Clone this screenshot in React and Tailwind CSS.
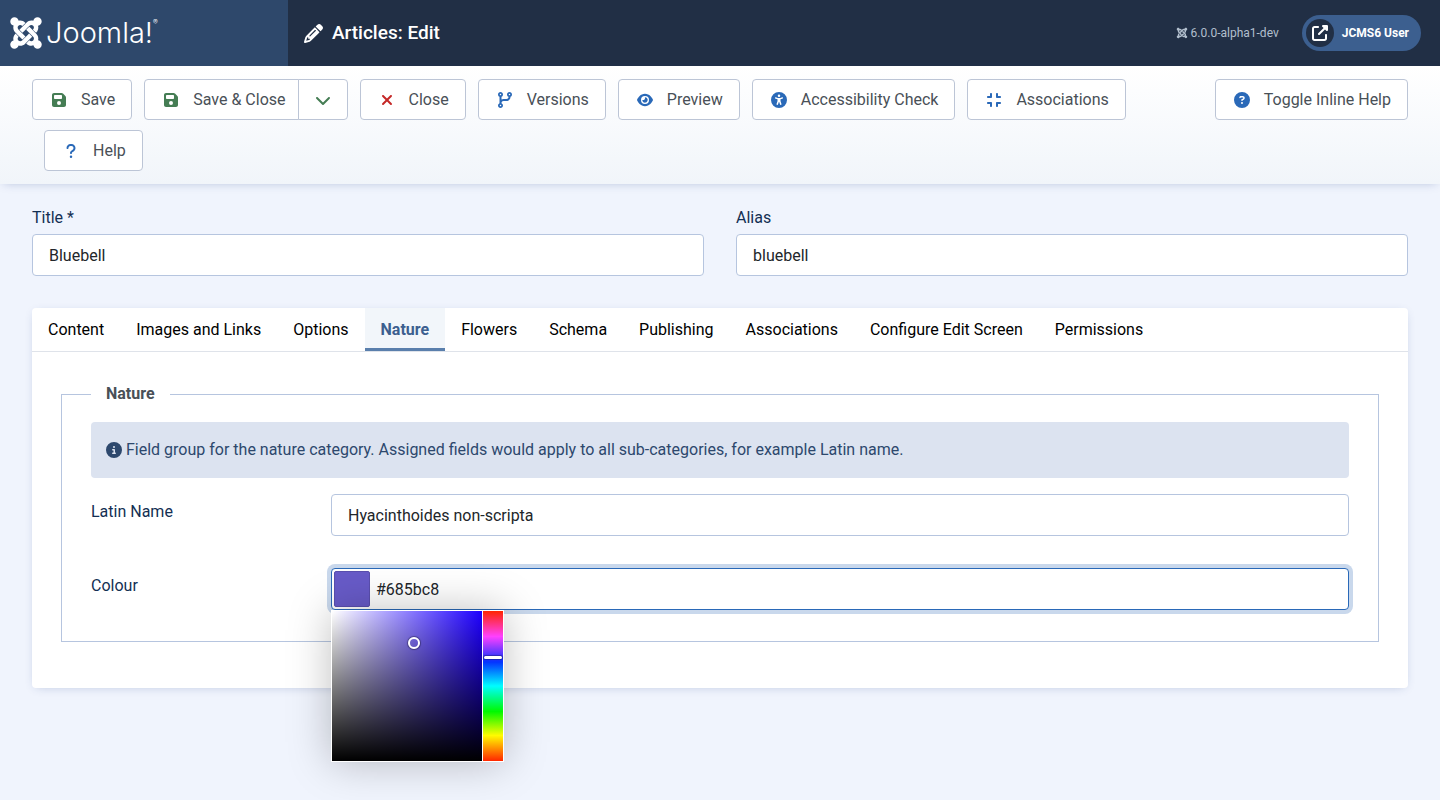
import React, { useState } from "react";
import {
  FaChevronDown,
  FaCircleInfo,
  FaCircleQuestion,
  FaCodeBranch,
  FaCompress,
  FaEye,
  FaFloppyDisk,
  FaJoomla,
  FaPencil,
  FaQuestion,
  FaUniversalAccess,
  FaUpRightFromSquare,
  FaXmark,
} from "react-icons/fa6";

const tabs = [
  "Content",
  "Images and Links",
  "Options",
  "Nature",
  "Flowers",
  "Schema",
  "Publishing",
  "Associations",
  "Configure Edit Screen",
  "Permissions",
];

function ToolbarButton({ icon: Icon, tone = "text-[#2a69b8]", className = "ml-3 rounded", children }) {
  return (
    <button
      type="button"
      className={`flex h-[41px] items-center gap-3 border border-[#bcc5d6] bg-white px-4 text-[#495057] ${className}`}
    >
      <span className={`flex w-5 justify-center ${tone}`}>
        <Icon aria-hidden="true" />
      </span>
      {children}
    </button>
  );
}

function Header() {
  return (
    <header className="flex h-[66px] items-stretch bg-[#212f45] text-white">
      <a href="#home" aria-label="Joomla!" className="flex w-72 shrink-0 items-center gap-0.5 bg-[#2e486b] px-2">
        <FaJoomla className="size-9" aria-hidden="true" />
        <span className="flex items-start font-['Inter'] text-[29px] leading-8 font-light">
          Joomla!<span className="text-[7px] leading-3">®</span>
        </span>
      </a>
      <div className="flex flex-1 items-center px-4">
        <FaPencil className="size-[19px]" aria-hidden="true" />
        <h1 className="ml-[9px] text-[19px] font-medium">Articles: Edit</h1>
        <div className="ml-auto flex items-center gap-[3px] text-xs text-[#b2bfcd]">
          <FaJoomla className="size-3" aria-hidden="true" />
          <span>6.0.0-alpha1-dev</span>
        </div>
        <a
          href="#site"
          className="mr-[3px] ml-[23px] flex h-9 items-center gap-2 rounded-full bg-[#3c5f8f] pr-3 pl-1 text-xs font-bold"
        >
          <span className="flex size-7 items-center justify-center rounded-full bg-[#212f45]">
            <FaUpRightFromSquare className="size-4" aria-hidden="true" />
          </span>
          JCMS6 User
        </a>
      </div>
    </header>
  );
}

function Toolbar() {
  return (
    <div
      role="toolbar"
      aria-label="Toolbar"
      className="flex flex-wrap gap-y-2.5 bg-linear-to-b from-white to-[#f1f5fa] px-8 py-[13px] shadow-[0_2px_10px_-4px_rgba(30,60,130,0.35)]"
    >
      <ToolbarButton icon={FaFloppyDisk} tone="text-[#457d54]" className="rounded">Save</ToolbarButton>
      <div className="ml-3 flex">
        <ToolbarButton icon={FaFloppyDisk} tone="text-[#457d54]" className="rounded-l pr-3">
          Save &amp; Close
        </ToolbarButton>
        <button
          type="button"
          aria-label="More save options"
          className="-ml-px flex w-[50px] items-center justify-center rounded-r border border-[#bcc5d6] bg-white text-[#457d54]"
        >
          <FaChevronDown aria-hidden="true" />
        </button>
      </div>
      <ToolbarButton icon={FaXmark} tone="text-[#c52827]">Close</ToolbarButton>
      <ToolbarButton icon={FaCodeBranch}>Versions</ToolbarButton>
      <ToolbarButton icon={FaEye}>Preview</ToolbarButton>
      <ToolbarButton icon={FaUniversalAccess}>Accessibility Check</ToolbarButton>
      <ToolbarButton icon={FaCompress}>Associations</ToolbarButton>
      <ToolbarButton icon={FaCircleQuestion} className="ml-auto rounded">Toggle Inline Help</ToolbarButton>
      <ToolbarButton icon={FaQuestion}>Help</ToolbarButton>
    </div>
  );
}

function TitleField({ id, label, value }) {
  return (
    <div className="flex flex-1 flex-col gap-1">
      <label htmlFor={id} className="text-[#132f53]">{label}</label>
      <input
        id={id}
        defaultValue={value}
        className="h-[42px] w-full rounded border border-[#b6c5df] bg-white px-4 text-[#22262a] outline-none"
      />
    </div>
  );
}

function ColourPicker() {
  return (
    <div className="absolute top-full -left-px z-10 mt-px flex gap-px border border-white bg-white shadow-[0_0_40px_rgba(0,0,0,0.25)]">
      <div className="relative size-[150px] bg-[linear-gradient(to_bottom,transparent,#000),linear-gradient(to_right,#fff,#1e00ff)]">
        <span className="absolute top-[26px] left-[76px] size-3 rounded-full border-2 border-white shadow-[0_0_1px_1px_rgba(0,0,0,0.35)]" />
        <input type="range" aria-label="Saturation" defaultValue="54" className="absolute inset-0 size-full opacity-0" />
      </div>
      <div className="relative h-[150px] w-5 bg-[linear-gradient(to_bottom,#ff2600_0%,#ff40ff_17%,#0433ff_34%,#00fdff_50%,#00f900_67%,#fffb00_83%,#ff2600_100%)]">
        <span className="absolute inset-x-px top-[45px] h-[3px] rounded-sm bg-white shadow-[0_0_1px_1px_rgba(0,0,0,0.3)]" />
        <input type="range" aria-label="Hue" defaultValue="69" className="absolute inset-0 size-full opacity-0" />
      </div>
    </div>
  );
}

function NaturePanel() {
  return (
    <div role="tabpanel" aria-label="Nature" className="px-[29px] pt-[30px] pb-[46px]">
      <fieldset className="border border-[#b6c5df] px-[29px] pt-4 pb-[31px]">
        <legend className="px-[15px] text-base font-bold text-[#495057]">Nature</legend>
        <div className="flex min-h-14 items-center gap-1 rounded bg-[#dce3f0] px-[15px] text-[#2d486d]">
          <FaCircleInfo className="shrink-0" aria-hidden="true" />
          <span>
            Field group for the nature category. Assigned fields would apply to all sub-categories, for example Latin
            name.
          </span>
        </div>
        <div className="mt-4 flex items-start">
          <label htmlFor="latin-name" className="w-60 shrink-0 pt-1.5 text-[#132f53]">Latin Name</label>
          <input
            id="latin-name"
            defaultValue="Hyacinthoides non-scripta"
            className="h-[42px] min-w-0 flex-1 rounded border border-[#b6c5df] bg-white px-4 text-[#22262a] outline-none"
          />
        </div>
        <div className="mt-8 flex items-start">
          <label htmlFor="colour" className="w-60 shrink-0 pt-1.5 text-[#132f53]">Colour</label>
          <div className="relative flex h-[42px] min-w-0 flex-1 items-center gap-1.5 rounded border border-[#2a69b8] bg-white pl-0.5 shadow-[0_0_0_4px_#c9d8ec]">
            <span className="size-9 shrink-0 rounded-xs border border-[#5a4fae] bg-[#685bc8]" />
            <input id="colour" defaultValue="#685bc8" className="h-full min-w-0 flex-1 text-[#22262a] outline-none" />
            <ColourPicker />
          </div>
        </div>
      </fieldset>
    </div>
  );
}

export default function App() {
  const [active, setActive] = useState("Nature");
  return (
    <div className="min-h-screen bg-[#f0f4fd] font-['Roboto',sans-serif] text-base text-[#22262a]">
      <Header />
      <Toolbar />
      <main className="px-8 pt-[22px] pb-8">
        <div className="flex gap-8">
          <TitleField id="title" label="Title *" value="Bluebell" />
          <TitleField id="alias" label="Alias" value="bluebell" />
        </div>
        <section className="mt-8 rounded bg-white shadow-[0_2px_10px_-4px_rgba(30,60,130,0.3)]">
          <div role="tablist" className="flex h-11 overflow-hidden rounded-t border-b border-[#dfe3ea]">
            {tabs.map((tab) => (
              <button
                key={tab}
                type="button"
                role="tab"
                aria-selected={tab === active}
                onClick={() => setActive(tab)}
                className={
                  tab === active
                    ? "border-b-3 border-[#5a7fac] bg-[#f2f6fa] px-4 pt-[3px] font-bold text-[#3c5f8f]"
                    : "border-b-3 border-transparent px-4 pt-[3px] text-black"
                }
              >
                {tab}
              </button>
            ))}
          </div>
          <NaturePanel />
        </section>
      </main>
    </div>
  );
}
